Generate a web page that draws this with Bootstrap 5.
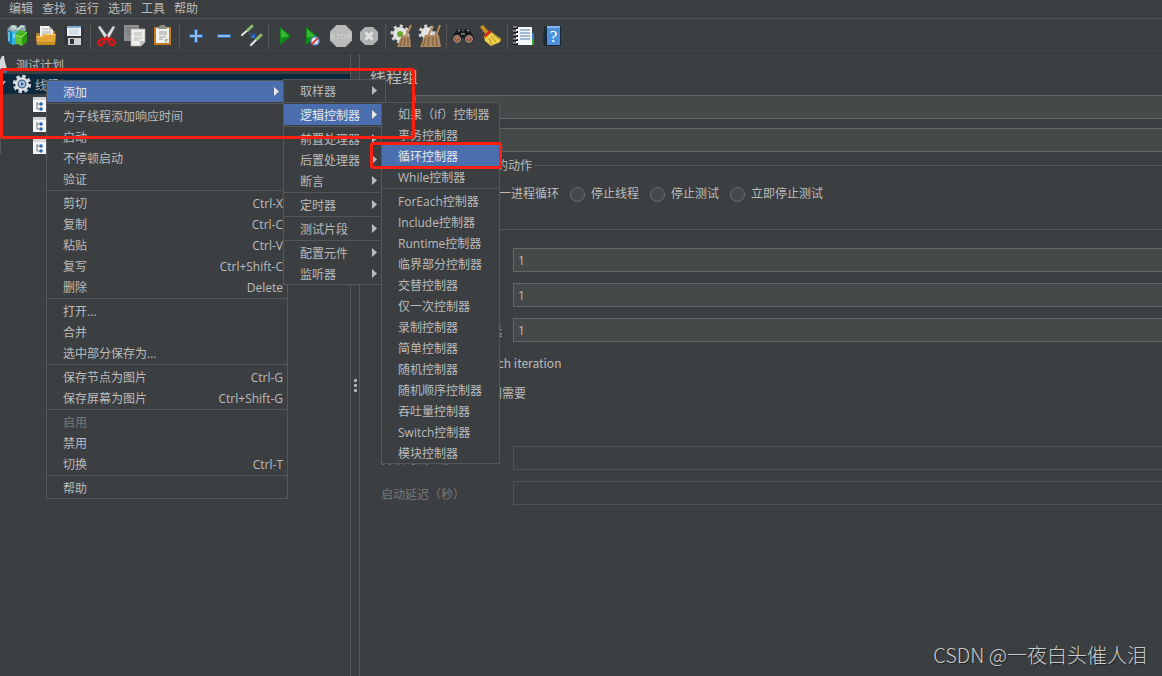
<!DOCTYPE html>
<html lang="zh-CN">
<head>
<meta charset="utf-8">
<meta name="viewport" content="width=device-width, initial-scale=1">
<title>线程组</title>
<link href="https://cdn.jsdelivr.net/npm/bootstrap@5.3.0/dist/css/bootstrap.min.css" rel="stylesheet">
<style>
  :root { --bg:#3c3f41; --line:#555758; --text:#bbbbbb; --pick:#4b6eaf; }
  html, body { height:100%; }
  body { background:var(--bg); color:var(--text); font:12px/20px "Open Sans","Noto Sans CJK SC",sans-serif; overflow:hidden; }
  button, input { font:inherit; color:inherit; }
  .menubar { height:19px; padding-left:9px; gap:9px; border-bottom:1px solid #515354; }
  .menubar button, .tool { background:none; border:0; padding:0; line-height:16px; }
  .toolbar { height:35px; padding-left:4px; border-bottom:1px solid #35383a; }
  .tool { width:28px; height:28px; display:flex; align-items:center; justify-content:center; flex:none; }
  .tool svg { width:24px; height:24px; }
  .tool-sep { width:1px; height:25px; margin:0 2px; background:var(--line); flex:none; }
  .tree-pane { width:351px; border-right:1px solid var(--line); }
  .tree-row { height:20px; gap:5px; white-space:nowrap; }
  .tree-row span { padding-top:3px; }
  .tree-row.picked { background:#0d293e; gap:4px; }
  .tree-kids { border-left:1px solid var(--line); padding-left:32px; height:60px; }
  .splitter { width:9px; border-right:1px solid var(--line); }
  .grip { gap:2px; margin-top:325px; }
  .splitter i { width:3px; height:3px; border-radius:1px; background:#b4b6b7; }
  .form-pane { padding:12px 0 0 10px; min-width:0; }
  .form-pane h1 { font-size:16px; line-height:22px; margin:0 0 7px; }
  .note-row { margin:9px 0 3px; }
  .field { height:24px; background:#45494a; border:1px solid #646667; border-right:0; padding:0 4px; border-radius:0; min-width:0; outline:0; }
  .field:disabled { background:var(--bg); border-color:#505354; }
  .name-label { width:45px; padding-top:4px; }
  fieldset { border-top:1px solid var(--line); }
  legend { font-size:12px; line-height:18px; margin:0 0 9px 3px; padding:2px 3px 0; }
  .actions { gap:11px; margin-bottom:15px; }
  .prop-label { width:132px; padding-top:3px; }
  .props { padding-left:11px; gap:11px; }
  .dim { color:#777777; }
  .dot, .tick { appearance:none; width:15px; height:15px; margin:0; background:#45494a; border:1px solid #6b6e6f; flex:none; }
  .dot { border-radius:50%; }
  .choice { gap:6px; }
  .narrow-latin { font-family:"Noto Sans CJK SC",sans-serif; }
  .dropdown-menu { --bs-dropdown-min-width:0; display:block; margin:0; padding:0; border:1px solid var(--line); border-radius:0; background:var(--bg); color:var(--text); font-size:12px; }
  .dropdown-item { display:flex; justify-content:space-between; align-items:center; height:21px; line-height:19px; padding:2px 4px 0 16px; color:var(--text); }
  .dropdown-item:hover { background:var(--pick); color:#fff; }
  .dropdown-item.active { background:var(--pick); color:#e4e6e8; }
  .dropdown-item:disabled { color:#777777; }
  .dropdown-item svg { width:5px; height:9px; margin:0 4px 2px 0; fill:#bbbbbb; }
  .dropdown-item.active svg { fill:#e8e8e8; }
  .dropdown-divider { height:1px; margin:1px 0; border:0; background:var(--line); opacity:1; }
  .main-menu { left:46px; top:80px; width:242px; }
  .add-menu { left:236px; top:-2px; width:103px; }
  .logic-menu { left:97px; top:-2px; width:119px; }
  .frame { position:absolute; border:3px solid #ff1f10; border-radius:3px; z-index:2000; pointer-events:none; }
  .frame-add { left:0; top:68px; width:415px; height:71px; }
  .frame-loop { left:370px; top:142px; width:132px; height:27px; }
  .watermark { position:absolute; right:15px; bottom:6px; font:300 20px/30px "Noto Sans CJK SC",sans-serif; color:#c9cacb; text-shadow:1px 1px 1px #222; }
</style>
</head>
<body class="d-flex flex-column position-relative">
<nav class="menubar d-flex flex-shrink-0">
  <button>编辑</button><button>查找</button><button>运行</button><button>选项</button><button>工具</button><button>帮助</button>
</nav>

<div class="toolbar d-flex align-items-center flex-shrink-0" role="toolbar">
  <button class="tool" aria-label="模板"><svg viewBox="0 0 24 24"><path d="M1 6l4-5h5l2 3 3-3h4l1 6-8 4z" fill="#8fa9ae"/><path d="M5 5l2-3 3 2M11 6l4-4 3 1M7 6l3-3" stroke="#dce9ea" stroke-width="1.2" fill="none"/><path d="M1 6l5 2v13l-4-3z" fill="#1583b8"/><path d="M6 8l5-1v13l-5 1z" fill="#35b3e4"/><path d="M3 8v9M8 9v5" stroke="#c6efff"/><path d="M9 11l7 2v9l-7-3z" fill="#62c431"/><path d="M16 12l5-4v10l-5 4z" fill="#2d9a17"/><path d="M9 11l4-5 8 2-5 5z" fill="#46b324"/><path d="M9 11l7 2 5-5" stroke="#a2ea6b" fill="none"/></svg></button>
  <button class="tool" aria-label="打开"><svg viewBox="0 0 24 24"><path d="M2 9h5l2-2h12v13H3z" fill="#b98120"/><path d="M6 2h9l4 4v8H6z" fill="#f2f2ef"/><path d="M15 2v4h4z" fill="#bbb"/><path d="M8 5h6M8 8h9M8 10h9" stroke="#aaa"/><path d="M2 12h6l2-2h12l-1 11H3z" fill="#e2a634"/><path d="M3 12.500h6l2-2h10" stroke="#ffd676" fill="none"/><path d="M3 18h18v3H3z" fill="#c98c1e"/></svg></button>
  <button class="tool" aria-label="保存"><svg viewBox="0 0 24 24"><path d="M4 2h17l1 1v18H3l-1-1V3z" fill="#34383d"/><path d="M5 2h14v10H5z" fill="#eef2f4"/><path d="M5 2h14v2H5z" fill="#7daed6"/><path d="M7 6h10M7 8h10M7 10h10" stroke="#bccbd8"/><path d="M6 14h13v7H6z" fill="#cfd1d2"/><path d="M8 15h4v5H8z" fill="#303438"/></svg></button>
  <span class="tool-sep"></span>
  <button class="tool" aria-label="剪切"><svg viewBox="0 0 24 24"><path d="M3 3l2-1 9 12-3 2zM20 3l-2-1-8 12 3 2z" fill="#dfe1e2" stroke="#999" stroke-width=".5"/><ellipse cx="6.500" cy="18" rx="3.500" ry="2.300" transform="rotate(-40 6.500 18)" fill="none" stroke="#df1515" stroke-width="2.400"/><ellipse cx="16.500" cy="18" rx="3.500" ry="2.300" transform="rotate(40 16.500 18)" fill="none" stroke="#df1515" stroke-width="2.400"/><path d="M12 13l-3 4M11 13l4 4" stroke="#df1515" stroke-width="2.400"/></svg></button>
  <button class="tool" aria-label="复制"><svg viewBox="0 0 24 24"><path d="M1 1h15v16H1z" fill="#8d8f8e"/><path d="M3 4h11M3 7h9M3 10h5" stroke="#707270"/><path d="M8 5h14v13l-4 4H8z" fill="#eeeeeb" stroke="#aaa" stroke-width=".7"/><path d="M11 9h8M11 11h8M11 14h8M11 16h6" stroke="#b5b5b2"/><path d="M17 22v-5h5z" fill="#bbb"/></svg></button>
  <button class="tool" aria-label="粘贴"><svg viewBox="0 0 24 24"><path d="M3 3h17v18H3z" fill="#c17d1f"/><path d="M5 4h13v15H5z" fill="#f1f1ee"/><path d="M7 3l3-2h3l3 2v2H7z" fill="#8c9182"/><path d="M8 8h8M8 10h8M8 13h7M8 15h4" stroke="#9d9f9e"/><path d="M14 19v-4h4z" fill="#aaa"/></svg></button>
  <span class="tool-sep"></span>
  <button class="tool" aria-label="展开"><svg viewBox="0 0 24 24"><path d="M12 5v14M5 12h14" stroke="#3466a5" stroke-width="4"/><path d="M12 6v12M6 12h12" stroke="#91bce9" stroke-width="2"/></svg></button>
  <button class="tool" aria-label="折叠"><svg viewBox="0 0 24 24"><path d="M5 12h14" stroke="#3466a5" stroke-width="4"/><path d="M6 12h12" stroke="#91bce9" stroke-width="2"/></svg></button>
  <button class="tool" aria-label="切换"><svg viewBox="0 0 24 24"><path d="M2 11l7-6" stroke="#e3e4dd" stroke-width="2.200" stroke-linecap="round"/><path d="M8 6l4-4" stroke="#86bb70" stroke-width="3" stroke-linecap="round"/><path d="M11 21l6-6" stroke="#e3e4dd" stroke-width="2.200" stroke-linecap="round"/><path d="M17 15l4-4" stroke="#86bb70" stroke-width="3" stroke-linecap="round"/><path d="M9 9l4 3" stroke="#2d67bd" stroke-width="1.500" stroke-dasharray="2 1"/><path d="M15 9v5h-5z" fill="#3274d2"/></svg></button>
  <span class="tool-sep"></span>
  <button class="tool" aria-label="启动"><svg viewBox="0 0 24 24"><path d="M7 3l11 9-11 9z" fill="#0f8a14"/><path d="M8 5l8 7-8 2z" fill="#34b936"/></svg></button>
  <button class="tool" aria-label="不停顿启动"><svg viewBox="0 0 24 24"><path d="M5 3l11 9-11 9z" fill="#0f8a14"/><path d="M6 5l8 7-8 2z" fill="#34b936"/><circle cx="14" cy="17" r="4" fill="#e6edf5" stroke="#5d91cc" stroke-width="1.500"/><path d="M11 20l6-6" stroke="#dd3a2b" stroke-width="1.800"/></svg></button>
  <button class="tool" aria-label="停止" disabled><svg viewBox="0 0 24 24"><path d="M7.500 1h9L23 7.500v9L16.500 23h-9L1 16.500v-9z" fill="#b9baba"/><path d="M5 9h14v6H5z" fill="#b2b3b3"/><text x="12" y="15" font-size="8" font-weight="700" text-anchor="middle" fill="#d0d1d1" font-family="Liberation Sans, sans-serif">STOP</text></svg></button>
  <button class="tool" aria-label="关闭" disabled><svg viewBox="0 0 24 24"><path d="M8 3h8l5 5v8l-5 5H8l-5-5V8z" fill="#b1b2b2"/><path d="M8.500 8.500l7 7M15.500 8.500l-7 7" stroke="#e2e2e2" stroke-width="3"/></svg></button>
  <span class="tool-sep"></span>
  <button class="tool" aria-label="清除"><svg viewBox="0 0 24 24"><circle cx="10" cy="10" r="7" fill="#e3e5e3"/><circle cx="10" cy="10" r="8" fill="none" stroke="#d3d5d3" stroke-width="3" stroke-dasharray="3 3.200"/><circle cx="10" cy="10" r="3" fill="#69a833"/><path d="M21 1l-5 11" stroke="#b88d61" stroke-width="2"/><path d="M12 11l8 1 1 11H7z" fill="#ad875e"/><path d="M12 14l-2 8M15 14l-1 8M18 14v8" stroke="#76583a"/></svg></button>
  <button class="tool" aria-label="清除全部"><svg viewBox="0 0 24 24"><circle cx="9" cy="9" r="6" fill="#e3e5e3"/><circle cx="9" cy="9" r="7" fill="none" stroke="#d3d5d3" stroke-width="3" stroke-dasharray="3 3"/><path d="M15 2l-5 10M22 1l-4 11" stroke="#b88d61" stroke-width="2"/><path d="M7 11l14 0 2 12H2z" fill="#ad875e"/><path d="M8 14l-3 8M11 13l-1 9M15 13v9M18 13l1 9" stroke="#76583a"/></svg></button>
  <span class="tool-sep"></span>
  <button class="tool" aria-label="查找"><svg viewBox="0 0 24 24"><path d="M6 5l4 0 2 4 2-4h4l5 9-2 5h-5l-4-6-4 6H3l-2-5z" fill="#17191a"/><path d="M7 6l2 1M16 6l2 1M10 10h4" stroke="#8a8c8c" stroke-width="1.500"/><circle cx="6" cy="15" r="3.500" fill="#9b573f" stroke="#a3a09b" stroke-width="1"/><circle cx="18" cy="15" r="3.500" fill="#9b573f" stroke="#a3a09b" stroke-width="1"/><path d="M5 15l2-2M17 15l2-2" stroke="#e8b197"/></svg></button>
  <button class="tool" aria-label="重置搜索"><svg viewBox="0 0 24 24"><path d="M1 3l3-2 6 7-3 3z" fill="#cf8f1c"/><path d="M5 12l6-5 11 8-1 3-9 4-6-5z" fill="#efd14a"/><path d="M10 14l3 7M12 12l5 6M14 10l7 6" stroke="#ad8820"/><path d="M5 11l6-5 2 2-7 6z" fill="#d52a1c"/></svg></button>
  <span class="tool-sep"></span>
  <button class="tool" aria-label="函数助手"><svg viewBox="0 0 24 24"><path d="M18 9h4v6h-4z" fill="#3c77d3"/><path d="M18 15h4v6h-4z" fill="#2e9f38"/><path d="M4 3h16v18H4z" fill="#f4f5f6"/><path d="M8 6h10M8 9h10M8 12h10M8 15h10" stroke="#557eae"/><path d="M1 4h5M1 8h5M1 12h5M1 16h5M1 20h5" stroke="#161616" stroke-width="2"/><path d="M1 3h4M1 7h4M1 11h4M1 15h4M1 19h4" stroke="#ccc"/></svg></button>
  <button class="tool" aria-label="帮助"><svg viewBox="0 0 24 24"><path d="M4 2h17v20H5l-2-2z" fill="#1b2838"/><path d="M7 2h13v19H7z" fill="#4d8fda"/><path d="M7 2h13v2H7z" fill="#82b5ec"/><text x="13.500" y="18" font-size="17" text-anchor="middle" fill="#fff" font-family="Liberation Serif, serif">?</text></svg></button>
</div>

<main class="d-flex flex-grow-1">
  <aside class="tree-pane flex-shrink-0">
    <div class="tree-row d-flex align-items-center">
      <svg width="11" height="20" viewBox="0 0 11 20"><path d="M2 2h2l1 6 2 7H0V6z" fill="#d6dadd"/><path d="M0 15l6-1 2 3-2 2H0z" fill="#2d6eb8"/></svg><span>测试计划</span>
    </div>
    <div class="tree-row picked d-flex align-items-center">
      <svg width="31" height="20" viewBox="0 0 31 20"><path d="M1 10l1 1 3-4" stroke="#ccc" stroke-width="1.500" fill="none"/><circle cx="22" cy="10" r="7.500" fill="none" stroke="#d4d5d6" stroke-width="3.400" stroke-dasharray="3.400 2.490"/><circle cx="22" cy="10" r="6.800" fill="#e3e4e5"/><circle cx="22" cy="10" r="3.800" fill="#b5cce4" stroke="#55759a" stroke-width="1.500"/><path d="M21 8l3 2-3 2z" fill="#234f89"/></svg><span>线程组</span>
    </div>
    <div class="tree-kids">
      <div class="tree-row d-flex align-items-center"><svg width="18" height="16" viewBox="0 0 18 16"><path d="M0 1h18v15H0z" fill="#f3f4f5"/><path d="M0 1h18v3H0z" fill="#d3d5d7"/><path d="M4 6v7h2M4 8h2" stroke="#777" fill="none"/><circle cx="8" cy="8" r="1.800" fill="#2865b7"/><circle cx="8" cy="13" r="1.800" fill="#2865b7"/></svg></div>
      <div class="tree-row d-flex align-items-center"><svg width="18" height="16" viewBox="0 0 18 16"><path d="M0 1h18v15H0z" fill="#f3f4f5"/><path d="M0 1h18v3H0z" fill="#d3d5d7"/><path d="M4 6v7h2M4 8h2" stroke="#777" fill="none"/><circle cx="8" cy="8" r="1.800" fill="#2865b7"/><circle cx="8" cy="13" r="1.800" fill="#2865b7"/></svg></div>
      <div class="tree-row d-flex align-items-end"><svg width="18" height="16" viewBox="0 0 18 16"><path d="M0 1h18v15H0z" fill="#f3f4f5"/><path d="M0 1h18v3H0z" fill="#d3d5d7"/><path d="M4 6v7h2M4 8h2" stroke="#777" fill="none"/><circle cx="8" cy="8" r="1.800" fill="#2865b7"/><circle cx="8" cy="13" r="1.800" fill="#2865b7"/></svg></div>
    </div>
  </aside>
  <div class="splitter d-flex flex-column align-items-center flex-shrink-0">
    <div class="grip d-flex flex-column"><i></i><i></i><i></i></div>
  </div>

  <section class="form-pane flex-grow-1">
    <h1 class="fw-normal">线程组</h1>
    <div class="d-flex align-items-center"><label class="name-label" for="name">名称：</label><input class="field flex-grow-1" id="name"></div>
    <div class="note-row d-flex align-items-center"><label class="name-label" for="note">注释：</label><input class="field flex-grow-1" id="note"></div>

    <fieldset>
      <legend class="float-none w-auto">在取样器错误后要执行的动作</legend>
      <div class="actions d-flex ps-3">
        <label class="choice d-flex align-items-center"><input type="radio" class="dot" name="act">继续</label>
        <label class="choice d-flex align-items-center"><input type="radio" class="dot" name="act">启动下一进程循环</label>
        <label class="choice d-flex align-items-center"><input type="radio" class="dot" name="act">停止线程</label>
        <label class="choice d-flex align-items-center"><input type="radio" class="dot" name="act">停止测试</label>
        <label class="choice d-flex align-items-center"><input type="radio" class="dot" name="act">立即停止测试</label>
      </div>
    </fieldset>

    <fieldset>
      <legend class="float-none w-auto">线程属性</legend>
      <div class="props d-flex flex-column">
        <div class="d-flex align-items-center"><label class="prop-label" for="threads">线程数：</label><input class="field flex-grow-1" id="threads" value="1"></div>
        <div class="d-flex align-items-center"><label class="prop-label" for="ramp">Ramp-Up时间（秒）</label><input class="field flex-grow-1" id="ramp" value="1"></div>
        <div class="d-flex align-items-center">
          <div class="prop-label d-flex"><label for="loops">循环次数</label><label class="choice d-flex align-items-center ps-4 ms-1"><input type="checkbox" class="tick">永远</label></div>
          <input class="field flex-grow-1" id="loops" value="1">
        </div>
        <label class="choice narrow-latin d-flex align-items-center ps-1"><input type="checkbox" class="tick">Same user on each iteration</label>
        <label class="choice d-flex align-items-center ps-1"><input type="checkbox" class="tick">延迟创建线程直到需要</label>
        <label class="choice d-flex align-items-center ps-1"><input type="checkbox" class="tick">调度器</label>
        <div class="d-flex align-items-center dim"><label class="prop-label" for="dur">持续时间（秒）</label><input class="field flex-grow-1" id="dur" disabled></div>
        <div class="d-flex align-items-center dim"><label class="prop-label" for="delay">启动延迟（秒）</label><input class="field flex-grow-1" id="delay" disabled></div>
      </div>
    </fieldset>
  </section>
</main>

<ul class="dropdown-menu main-menu show">
  <li class="position-relative"><button class="dropdown-item active">添加<svg viewBox="0 0 5 9"><path d="M0 0l5 4.500-5 4.500z"/></svg></button>
    <ul class="dropdown-menu add-menu show">
      <li><button class="dropdown-item">取样器<svg viewBox="0 0 5 9"><path d="M0 0l5 4.500-5 4.500z"/></svg></button></li>
      <li><hr class="dropdown-divider"></li>
      <li class="position-relative"><button class="dropdown-item active">逻辑控制器<svg viewBox="0 0 5 9"><path d="M0 0l5 4.500-5 4.500z"/></svg></button>
        <ul class="dropdown-menu logic-menu show">
          <li><button class="dropdown-item">如果（If）控制器</button></li>
          <li><button class="dropdown-item">事务控制器</button></li>
          <li><button class="dropdown-item active">循环控制器</button></li>
          <li><button class="dropdown-item">While控制器</button></li>
          <li><hr class="dropdown-divider"></li>
          <li><button class="dropdown-item">ForEach控制器</button></li>
          <li><button class="dropdown-item">Include控制器</button></li>
          <li><button class="dropdown-item">Runtime控制器</button></li>
          <li><button class="dropdown-item">临界部分控制器</button></li>
          <li><button class="dropdown-item">交替控制器</button></li>
          <li><button class="dropdown-item">仅一次控制器</button></li>
          <li><button class="dropdown-item">录制控制器</button></li>
          <li><button class="dropdown-item">简单控制器</button></li>
          <li><button class="dropdown-item">随机控制器</button></li>
          <li><button class="dropdown-item">随机顺序控制器</button></li>
          <li><button class="dropdown-item">吞吐量控制器</button></li>
          <li><button class="dropdown-item">Switch控制器</button></li>
          <li><button class="dropdown-item">模块控制器</button></li>
        </ul>
      </li>
      <li><hr class="dropdown-divider"></li>
      <li><button class="dropdown-item">前置处理器<svg viewBox="0 0 5 9"><path d="M0 0l5 4.500-5 4.500z"/></svg></button></li>
      <li><button class="dropdown-item">后置处理器<svg viewBox="0 0 5 9"><path d="M0 0l5 4.500-5 4.500z"/></svg></button></li>
      <li><button class="dropdown-item">断言<svg viewBox="0 0 5 9"><path d="M0 0l5 4.500-5 4.500z"/></svg></button></li>
      <li><hr class="dropdown-divider"></li>
      <li><button class="dropdown-item">定时器<svg viewBox="0 0 5 9"><path d="M0 0l5 4.500-5 4.500z"/></svg></button></li>
      <li><hr class="dropdown-divider"></li>
      <li><button class="dropdown-item">测试片段<svg viewBox="0 0 5 9"><path d="M0 0l5 4.500-5 4.500z"/></svg></button></li>
      <li><hr class="dropdown-divider"></li>
      <li><button class="dropdown-item">配置元件<svg viewBox="0 0 5 9"><path d="M0 0l5 4.500-5 4.500z"/></svg></button></li>
      <li><button class="dropdown-item">监听器<svg viewBox="0 0 5 9"><path d="M0 0l5 4.500-5 4.500z"/></svg></button></li>
    </ul>
  </li>
  <li><hr class="dropdown-divider"></li>
  <li><button class="dropdown-item">为子线程添加响应时间</button></li>
  <li><button class="dropdown-item">启动</button></li>
  <li><button class="dropdown-item">不停顿启动</button></li>
  <li><button class="dropdown-item">验证</button></li>
  <li><hr class="dropdown-divider"></li>
  <li><button class="dropdown-item">剪切<span>Ctrl-X</span></button></li>
  <li><button class="dropdown-item">复制<span>Ctrl-C</span></button></li>
  <li><button class="dropdown-item">粘贴<span>Ctrl-V</span></button></li>
  <li><button class="dropdown-item">复写<span>Ctrl+Shift-C</span></button></li>
  <li><button class="dropdown-item">删除<span>Delete</span></button></li>
  <li><hr class="dropdown-divider"></li>
  <li><button class="dropdown-item">打开...</button></li>
  <li><button class="dropdown-item">合并</button></li>
  <li><button class="dropdown-item">选中部分保存为...</button></li>
  <li><hr class="dropdown-divider"></li>
  <li><button class="dropdown-item">保存节点为图片<span>Ctrl-G</span></button></li>
  <li><button class="dropdown-item">保存屏幕为图片<span>Ctrl+Shift-G</span></button></li>
  <li><hr class="dropdown-divider"></li>
  <li><button class="dropdown-item" disabled>启用</button></li>
  <li><button class="dropdown-item">禁用</button></li>
  <li><button class="dropdown-item">切换<span>Ctrl-T</span></button></li>
  <li><hr class="dropdown-divider"></li>
  <li><button class="dropdown-item">帮助</button></li>
</ul>

<div class="frame frame-add"></div>
<div class="frame frame-loop"></div>
<div class="watermark">CSDN @一夜白头催人泪</div>
<script src="https://cdn.jsdelivr.net/npm/bootstrap@5.3.0/dist/js/bootstrap.bundle.min.js"></script>
</body>
</html>
